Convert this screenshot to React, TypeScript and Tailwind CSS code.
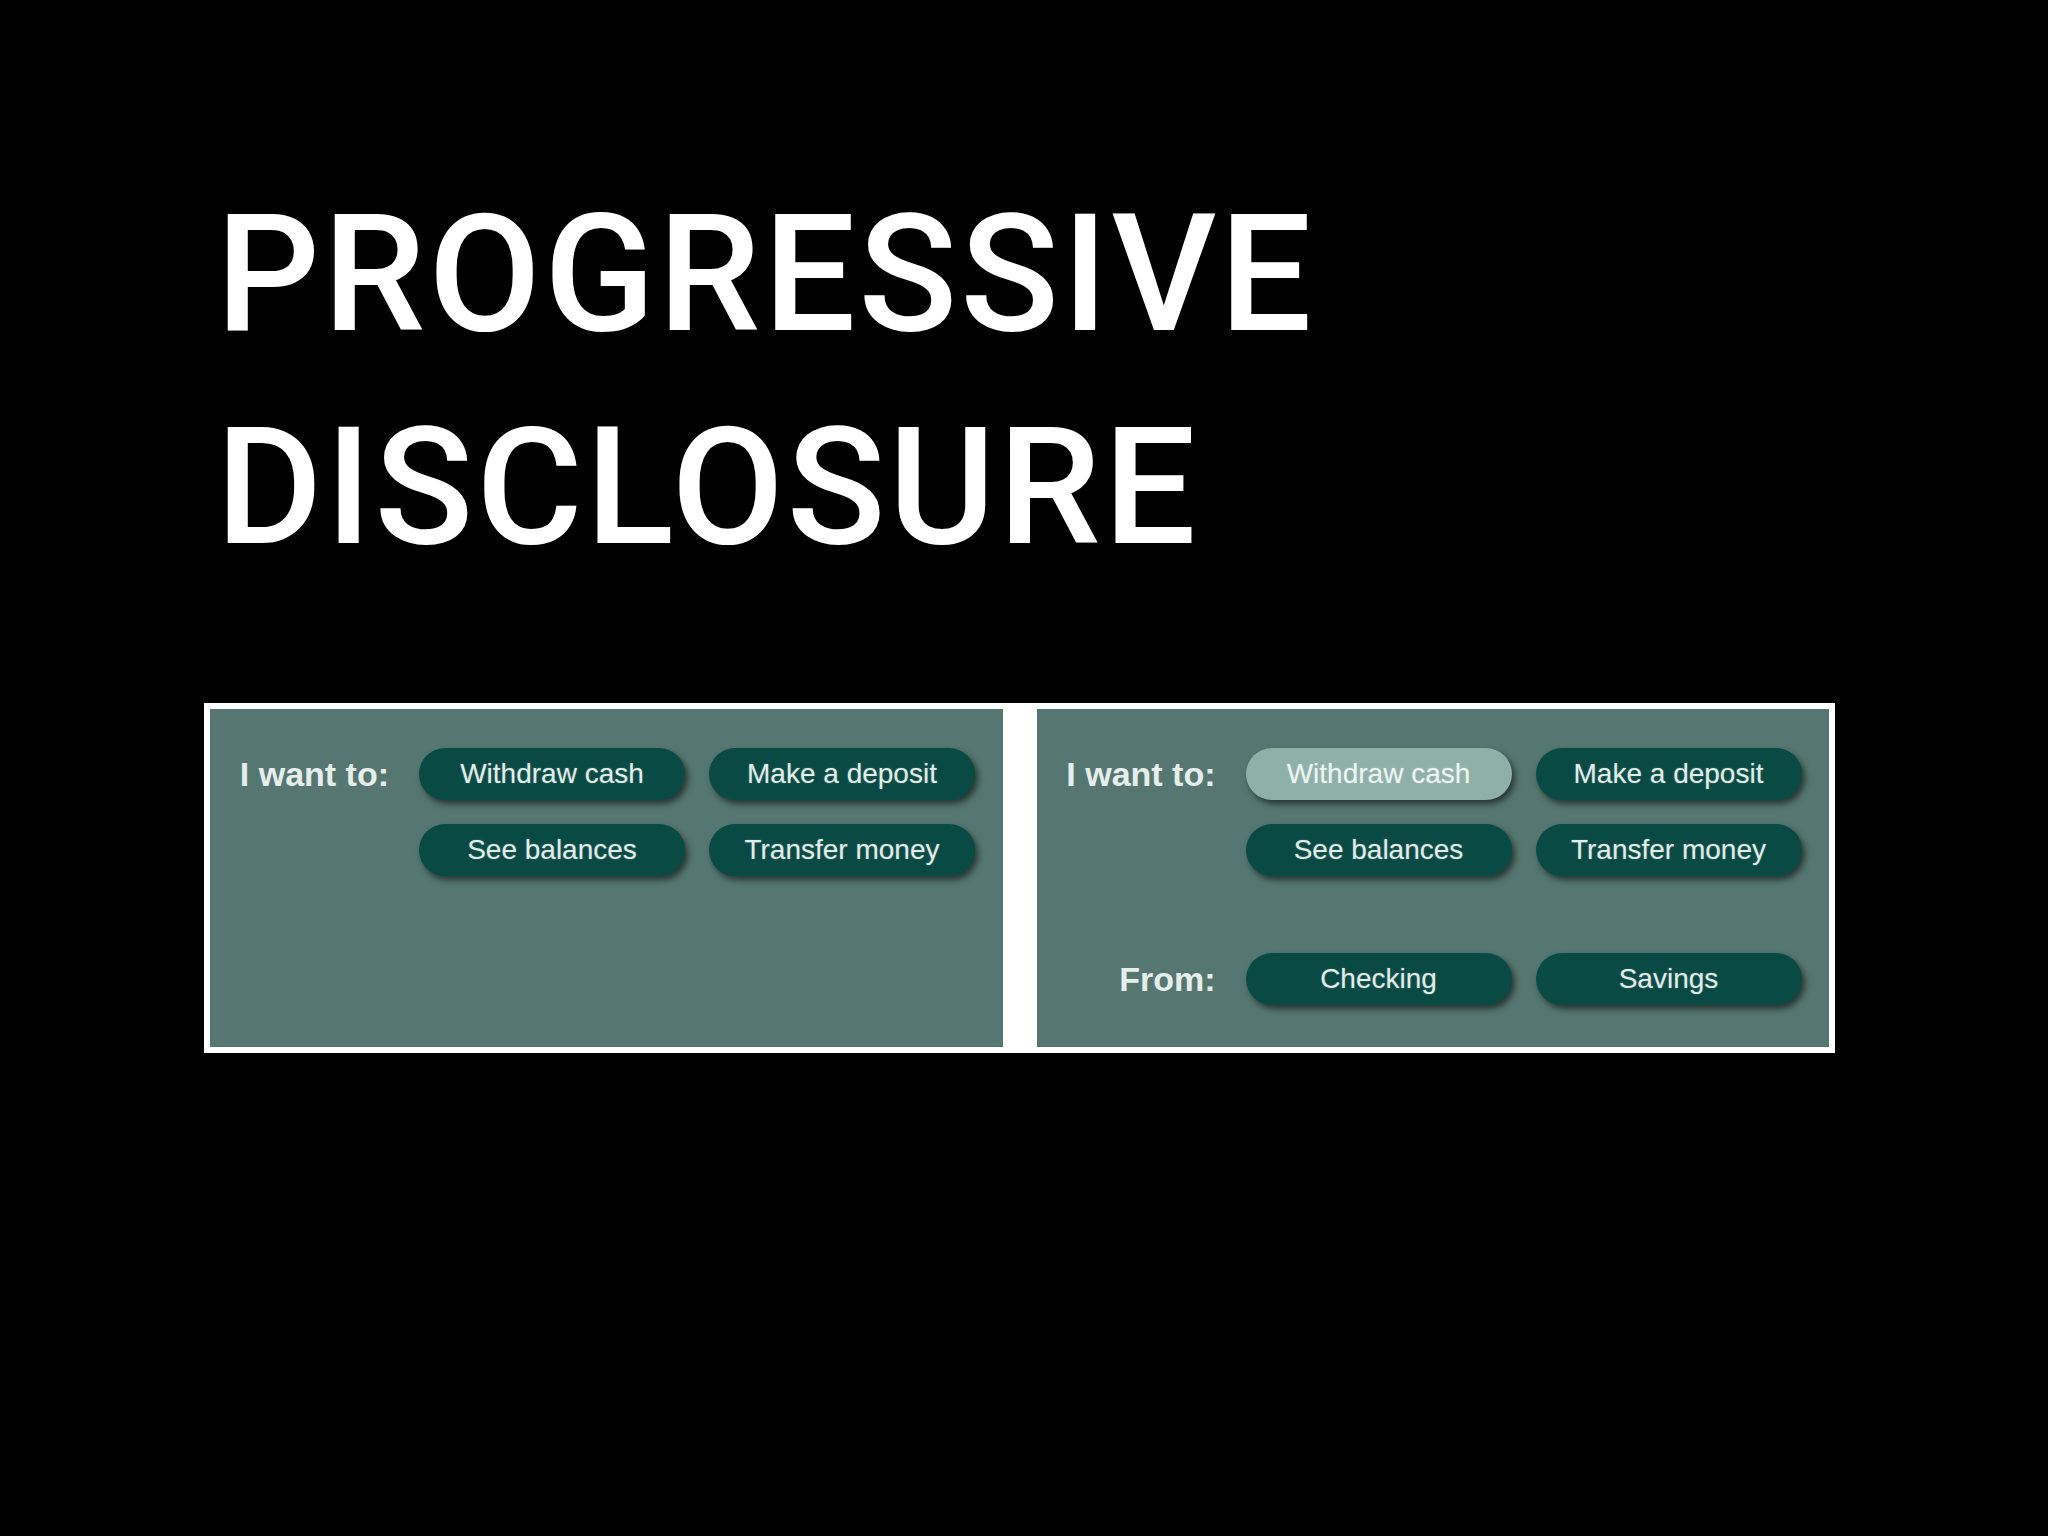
const choices = [
  ["Withdraw cash", "Make a deposit"],
  ["See balances", "Transfer money"],
];

const PillButton = ({ label, active = false }: { label: string; active?: boolean }) => (
  <button
    className={
      "h-[52px] w-[266px] rounded-full text-[28px] leading-none shadow-[3px_4px_6px_rgba(0,0,0,0.55)] [text-shadow:0_0_2px_rgba(255,255,255,0.25)] " +
      (active ? "bg-[#8fb0a9] text-[#eef4f2]" : "bg-[#0a4a44] text-[#e2ece9]")
    }
    style={{ fontFamily: '"Liberation Sans", Arial, sans-serif' }}
  >
    {label}
  </button>
);

const Row = ({ label, items, active }: { label?: string; items: string[]; active?: string }) => (
  <div className="flex items-center gap-[30px]">
    <div
      className="w-[150px] text-right text-[34px] font-bold leading-none text-[#e6eeec]"
      style={{ fontFamily: '"Liberation Sans", Arial, sans-serif' }}
    >
      {label}
    </div>
    <div className="flex gap-[24px]">
      {items.map((item) => (
        <PillButton key={item} label={item} active={item === active} />
      ))}
    </div>
  </div>
);

const Panel = ({ expanded = false }: { expanded?: boolean }) => (
  <div className="flex h-[338px] flex-1 flex-col gap-[24px] bg-[#567771] pl-[29px] pt-[39px]">
    {choices.map((row, i) => (
      <Row
        key={i}
        label={i === 0 ? "I want to:" : undefined}
        items={row}
        active={expanded ? "Withdraw cash" : undefined}
      />
    ))}
    {expanded && (
      <div className="mt-[53px]">
        <Row label="From:" items={["Checking", "Savings"]} />
      </div>
    )}
  </div>
);

export default function App() {
  return (
    <div className="min-h-[1536px] w-full bg-[#020102] pl-[204px] pt-[168px]">
      <h1
        className="ml-[12px] h-[428px] text-[163px] font-medium leading-[213px] tracking-[3px] text-white"
        style={{ fontFamily: 'Roboto, "Liberation Sans", sans-serif' }}
      >
        PROGRESSIVE
        <br />
        DISCLOSURE
      </h1>

      <div className="mt-[107px] flex w-[1631px] gap-[34px] bg-white p-[6px]">
        <Panel />
        <Panel expanded />
      </div>
    </div>
  );
}
